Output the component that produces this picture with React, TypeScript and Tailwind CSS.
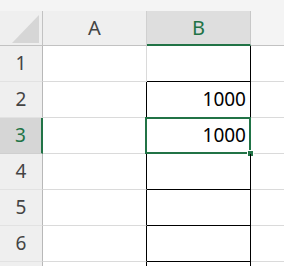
const rows = [1, 2, 3, 4, 5, 6, 7];

const values: Record<number, string> = { 2: "1000", 3: "1000" };

function RowHeader({ n, selected }: { n: number; selected: boolean }) {
    return (
        <div
            className={
                selected
                    ? "w-[43px] h-full flex items-center justify-center bg-[#d6d6d6] border-r-2 border-[#217346] border-b border-b-[#cfcfcf] text-[#217346]"
                    : "w-[43px] h-full flex items-center justify-center bg-[#efefef] border-r border-[#b8b8b8] border-b border-b-[#e2e2e2] text-[#444444]"
            }
        >
            {n < 7 && <span className="text-[19px] leading-none">{n}</span>}
        </div>
    );
}

export default function App() {
    return (
        <div className="w-[284px] h-[266px] overflow-hidden bg-white font-['Noto_Sans',_'Open_Sans',_sans-serif]">
            <div className="h-[11px] bg-[#f4f4f4]" />

            <div className="flex h-[35px] bg-[#efefef]">
                <div className="relative w-[43px] h-full border-r border-b border-[#c2c2c2]">
                    <svg className="absolute left-[12px] top-[4px]" width="28" height="28" viewBox="0 0 28 28">
                        <polygon points="27,0 27,28 0,28" fill="#d6d6d6" />
                    </svg>
                </div>
                <div className="w-[104px] h-full flex items-center justify-center border-r border-[#d0d0d0] border-b border-b-[#c2c2c2] text-[#444444]">
                    <span className="text-[20px] leading-none">A</span>
                </div>
                <div className="w-[104px] h-full flex items-center justify-center bg-[#dedede] border-r border-[#c8c8c8] border-b-2 border-b-[#217346] text-[#217346]">
                    <span className="text-[20px] leading-none">B</span>
                </div>
                <div className="flex-1 h-full bg-[#f4f4f4] border-b border-[#c2c2c2]" />
            </div>

            {rows.map((n) => (
                <div key={n} className="flex h-[36px]">
                    <RowHeader n={n} selected={n === 3} />
                    <div
                        className={
                            n === 1
                                ? "w-[104px] h-full border-r border-b border-[#dadada]"
                                : "w-[104px] h-full border-r border-r-black border-b border-b-[#dadada]"
                        }
                    />
                    <div className="relative w-[104px] h-full border-r border-b border-black flex items-center justify-end pr-[4px]">
                        {values[n] && <span className="text-[19px] leading-none text-black">{values[n]}</span>}
                        {n === 3 && (
                            <>
                                <div className="absolute -left-[2px] -top-[1px] -right-[1px] -bottom-[1px] border-2 border-[#217346]" />
                                <div className="absolute -right-[4px] -bottom-[4px] w-[7px] h-[7px] bg-[#217346] border border-white" />
                            </>
                        )}
                    </div>
                    <div className="flex-1 h-full border-b border-[#dadada]" />
                </div>
            ))}
        </div>
    );
}
